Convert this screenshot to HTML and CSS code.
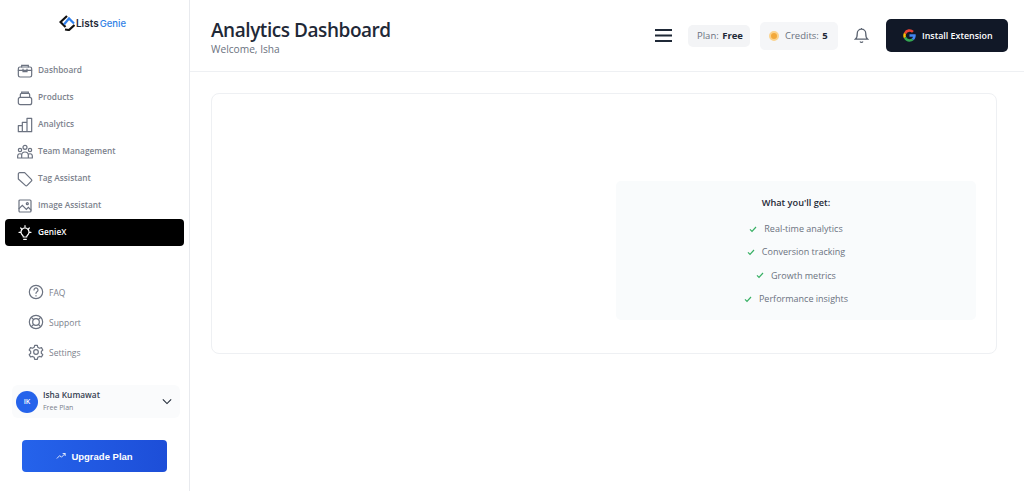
FILE: index.html
```html
<!DOCTYPE html>
<html lang="en">
<head>
<meta charset="utf-8">
<title>Analytics Dashboard</title>
<link rel="stylesheet" href="styles.css">
</head>
<body>
<div class="app">
  <aside class="sidebar">
    <div class="logo">
      <svg class="logo-mark" viewBox="0 0 16 16" fill="none" stroke-width="2.2"><path d="M8 1 1.500 7 6.500 12" stroke="#111"/><path d="M5 9.500 10 3.500 15 8.500" stroke="#2f80ed"/><path d="M15.500 10 10 15 6 14.500" stroke="#111"/></svg>
      <span class="logo-a">Lists</span><span class="logo-b">Genie</span>
    </div>
    <nav class="nav">
      <a class="nav-item"><svg class="ico" viewBox="0 0 24 24"><rect x="2" y="6" width="20" height="15" rx="2.500"/><path d="M7 6V3.500h10V6M2 11h20M9 9v4h6V9"/></svg><span class="label">Dashboard</span></a>
      <a class="nav-item"><svg class="ico" viewBox="0 0 24 24"><rect x="2" y="11" width="20" height="11" rx="3"/><path d="M5 11V7a2 2 0 0 1 2-2h10a2 2 0 0 1 2 2v4M7 5V3h10v2"/></svg><span class="label">Products</span></a>
      <a class="nav-item"><svg class="ico" viewBox="0 0 24 24"><path d="M2 13h6v9H2zM8 8h7v14H8zM15 2h7v20h-7z" stroke-linejoin="round"/></svg><span class="label">Analytics</span></a>
      <a class="nav-item"><svg class="ico" viewBox="0 0 24 24"><circle cx="12" cy="5" r="3"/><circle cx="4.500" cy="9" r="2.500"/><circle cx="19.500" cy="9" r="2.500"/><path d="M7 21v-4a5 5 0 0 1 10 0v4M1 21v-3a3.500 3.500 0 0 1 5-3M23 21v-3a3.500 3.500 0 0 0-5-3M1 21h22"/></svg><span class="label">Team Management</span></a>
      <a class="nav-item"><svg class="ico" viewBox="0 0 24 24"><path d="M2 4.500a2 2 0 0 1 2-2h7.500l10 10a2 2 0 0 1 0 2.800l-6.200 6.200a2 2 0 0 1-2.800 0L2 12z" stroke-linejoin="round"/></svg><span class="label">Tag Assistant</span></a>
      <a class="nav-item"><svg class="ico" viewBox="0 0 24 24"><rect x="3" y="3" width="18" height="18" rx="1.500"/><path d="m3 16 5-5 6 6 3-3 4 4"/><circle cx="15.500" cy="8.500" r="1.500"/></svg><span class="label">Image Assistant</span></a>
      <a class="nav-item nav-active"><svg class="ico" viewBox="0 0 24 24"><path d="M8 15a6 6 0 1 1 8 0c-1 1-1.500 2-1.500 3h-5c0-1-.5-2-1.500-3zM10 21.500h4M12 1v2M3 11h2M19 11h2M5.500 4.500 7 6M18.500 4.500 17 6"/></svg><span class="label">GenieX</span></a>
    </nav>
    <nav class="subnav">
      <a class="sub-item"><svg class="ico" viewBox="0 0 24 24"><circle cx="12" cy="12" r="10"/><path d="M9 9a3 3 0 1 1 4.500 2.600c-1 .6-1.500 1.200-1.500 2.400M12 17.500v.5"/></svg>FAQ</a>
      <a class="sub-item"><svg class="ico" viewBox="0 0 24 24"><circle cx="12" cy="12" r="10"/><circle cx="12" cy="12" r="5"/><path d="m5 5 3.500 3.500M19 5l-3.500 3.500M5 19l3.500-3.500M19 19l-3.500-3.500"/></svg>Support</a>
      <a class="sub-item"><svg class="ico" viewBox="0 0 24 24"><circle cx="12" cy="12" r="3.500"/><path d="M10 2h4l.7 3 2.500 1.400 3-.9 2 3.500-2.200 2.100v2.800l2.200 2.100-2 3.500-3-.9-2.500 1.400-.7 3h-4l-.7-3-2.500-1.400-3 .9-2-3.500 2.200-2.100v-2.800L1.800 9l2-3.500 3 .9L9.300 5z" stroke-linejoin="round"/></svg>Settings</a>
    </nav>
    <div class="user">
      <span class="avatar">IK</span>
      <span class="user-text"><span class="user-name">Isha Kumawat</span><span class="user-plan">Free Plan</span></span>
      <svg class="chev" viewBox="0 0 12 8"><path d="M1 1.500 6 6.500l5-5"/></svg>
    </div>
    <button class="upgrade"><svg class="trend" viewBox="0 0 24 24"><path d="M2 18l7-7 4 4 9-9M16 6h6v6"/></svg>Upgrade Plan</button>
  </aside>
  <div class="main">
    <header class="topbar">
      <div class="heading">
        <h1>Analytics Dashboard</h1>
        <p>Welcome, Isha</p>
      </div>
      <div class="actions">
        <svg class="burger" viewBox="0 0 17 13"><path d="M0 1h17M0 6.500h17M0 12h17"/></svg>
        <div class="chip chip-plan">Plan: <b>Free</b></div>
        <div class="chip chip-credits"><span class="coin"></span>Credits: <b>5</b></div>
        <svg class="bell" viewBox="2 0 20 24"><path d="M6 9a6 6 0 0 1 12 0c0 6 2.500 8 2.500 8h-17S6 15 6 9zM10 20.500a2.200 2.200 0 0 0 4 0M12 1.500V3"/></svg>
        <button class="install">
          <svg class="g" viewBox="0 0 24 24"><path fill="#ea4335" d="M12 5a7 7 0 0 1 4.700 1.800l3.300-3.300A11.500 11.500 0 0 0 1.800 6.700l3.800 3A7 7 0 0 1 12 5z"/><path fill="#fbbc05" d="M5 12c0-.8.200-1.600.6-2.300l-3.800-3a11.500 11.500 0 0 0 0 10.600l3.800-3A7 7 0 0 1 5 12z"/><path fill="#34a853" d="M12 19a7 7 0 0 1-6.400-4.700l-3.800 3A11.500 11.500 0 0 0 12 23.500c3 0 5.700-1 7.800-3l-3.600-2.800A7 7 0 0 1 12 19z"/><path fill="#4285f4" d="M23.500 12c0-.8-.1-1.600-.3-2.300H12v4.600h6.500a5.500 5.500 0 0 1-2.300 3.400l3.600 2.800c2.300-2.100 3.700-5.100 3.700-8.500z"/></svg>
          Install Extension
        </button>
      </div>
    </header>
    <main class="content">
      <section class="card">
        <div class="benefits">
          <h2>What you'll get:</h2>
          <ul>
            <li><svg class="check" viewBox="0 0 12 12"><path d="M1.500 6.500 4.500 9.500 10.500 3"/></svg>Real-time analytics</li>
            <li><svg class="check" viewBox="0 0 12 12"><path d="M1.500 6.500 4.500 9.500 10.500 3"/></svg>Conversion tracking</li>
            <li><svg class="check" viewBox="0 0 12 12"><path d="M1.500 6.500 4.500 9.500 10.500 3"/></svg>Growth metrics</li>
            <li><svg class="check" viewBox="0 0 12 12"><path d="M1.500 6.500 4.500 9.500 10.500 3"/></svg>Performance insights</li>
          </ul>
        </div>
      </section>
    </main>
  </div>
</div>
</body>
</html>
```
FILE: styles.css
```css
* { box-sizing: border-box; }
html, body { margin: 0; height: 100%; }
body { font-family: "Open Sans", "Noto Sans", sans-serif; background: #fff; color: #1f2937; overflow: hidden; }
.app { display: flex; height: 491px; }

.sidebar { width: 190px; flex: none; border-right: 1px solid #e8eaee; display: flex; flex-direction: column; }
.logo { display: flex; align-items: center; justify-content: center; height: 20px; margin: 13px 4px 0 0; font-size: 10px; font-weight: 600; font-family: "Inter", sans-serif; }
.logo-mark { width: 16px; height: 16px; margin-right: 1px; }
.logo-a { color: #1f2937; }
.logo-b { color: #2f7fe6; margin-left: 1px; font-size: 9.500px; font-weight: 500; }
.ico { width: 16px; height: 16px; fill: none; stroke: #6b7280; stroke-width: 1.800; flex: none; stroke-linecap: round; }

.nav { display: flex; flex-direction: column; margin: 24px 0 0 5px; width: 179px; }
.nav-item { display: flex; align-items: center; gap: 5px; height: 27px; padding-left: 12px; font-size: 8.300px; font-weight: 600; color: #7b818c; }
.label { margin-top: -2px; }
.nav-active { background: #000; color: #fff; border-radius: 4px; }
.nav-active .ico { stroke: #fff; }

.subnav { display: flex; flex-direction: column; margin: 31px 0 0 28px; }
.sub-item { display: flex; align-items: center; gap: 5px; height: 30px; font-size: 8.500px; font-weight: 500; color: #7b818c; }

.user { display: flex; align-items: center; margin: 18px 9px 0 12px; height: 33px; padding: 0 8px 0 4px; border-radius: 6px; background: #fafbfc; }
.avatar { width: 22px; height: 22px; border-radius: 50%; background: #2563eb; color: #fff; font-size: 7px; font-weight: 600; display: flex; align-items: center; justify-content: center; flex: none; }
.user-text { display: flex; flex-direction: column; margin: -2px 0 0 5px; flex: 1; gap: 1px; }
.user-name { font-size: 8.300px; font-weight: 600; color: #374151; line-height: 12px; }
.user-plan { font-size: 7px; color: #7b818c; line-height: 11px; }
.chev { width: 10px; height: 7px; fill: none; stroke: #1f2937; stroke-width: 1.300; }

.upgrade { display: flex; align-items: center; justify-content: center; gap: 5px; margin: 22px 0 0 22px; width: 145px; height: 32px; border: 0; border-radius: 4px; background: linear-gradient(90deg, #2563eb, #1d4ed8); color: #fff; font: 600 9.500px "Liberation Sans", sans-serif; }
.trend { width: 10px; height: 10px; fill: none; stroke: #fff; stroke-width: 2; }

.main { flex: 1; min-width: 0; display: flex; flex-direction: column; }
.topbar { height: 72px; border-bottom: 1px solid #eef0f3; display: flex; align-items: flex-start; justify-content: space-between; padding: 19px 16px 0 21px; }
.heading h1 { margin: 0; font-size: 19px; font-weight: 600; line-height: 22px; color: #1f2937; letter-spacing: -.45px; }
.heading p { margin: 2px 0 0; font-size: 10.200px; line-height: 12px; color: #6b7280; }
.actions { display: flex; align-items: center; height: 33px; }
.burger { width: 17px; height: 13px; fill: none; stroke: #1f2937; stroke-width: 1.800; margin-right: 16px; }
.chip { display: flex; align-items: center; background: #f3f4f6; border-radius: 5px; font-size: 9.500px; color: #6b7280; white-space: pre; }
.chip b { font-weight: 700; color: #1f2937; margin-left: 1px; }
.chip-plan { width: 62px; height: 22px; padding-left: 9px; margin-right: 10px; }
.chip-credits { width: 78px; height: 28px; padding-left: 9px; margin-right: 16px; background: #f5f6f8; }
.coin { width: 10px; height: 10px; border-radius: 50%; background: #f2a93b; border: 2px solid #fbd38d; margin-right: 6px; }
.bell { width: 15px; height: 17px; fill: none; stroke: #5b6370; stroke-width: 1.800; margin-right: 17px; }
.install { display: flex; align-items: center; gap: 6px; width: 122px; height: 33px; padding: 0 0 0 17px; border: 0; border-radius: 5px; background: #111827; color: #fff; font: 600 8.900px "Open Sans", sans-serif; }
.g { width: 13px; height: 13px; }

.content { padding: 21px 27px 0 21px; }
.card { height: 261px; border: 1px solid #eef0f3; border-radius: 8px; padding: 87px 20px 0 404px; }
.benefits { height: 139px; background: #f9fbfc; border-radius: 5px; padding-top: 15px; text-align: center; }
.benefits h2 { margin: 0; font-size: 9.200px; font-weight: 600; line-height: 14px; color: #1f2937; }
.benefits ul { list-style: none; margin: 7px 0 0; padding: 0; }
.benefits li { display: flex; align-items: center; justify-content: center; gap: 7px; height: 23.300px; font-size: 9px; color: #6b7280; }
.check { width: 8px; height: 8px; fill: none; stroke: #16a34a; stroke-width: 1.800; opacity: .85; }
```
